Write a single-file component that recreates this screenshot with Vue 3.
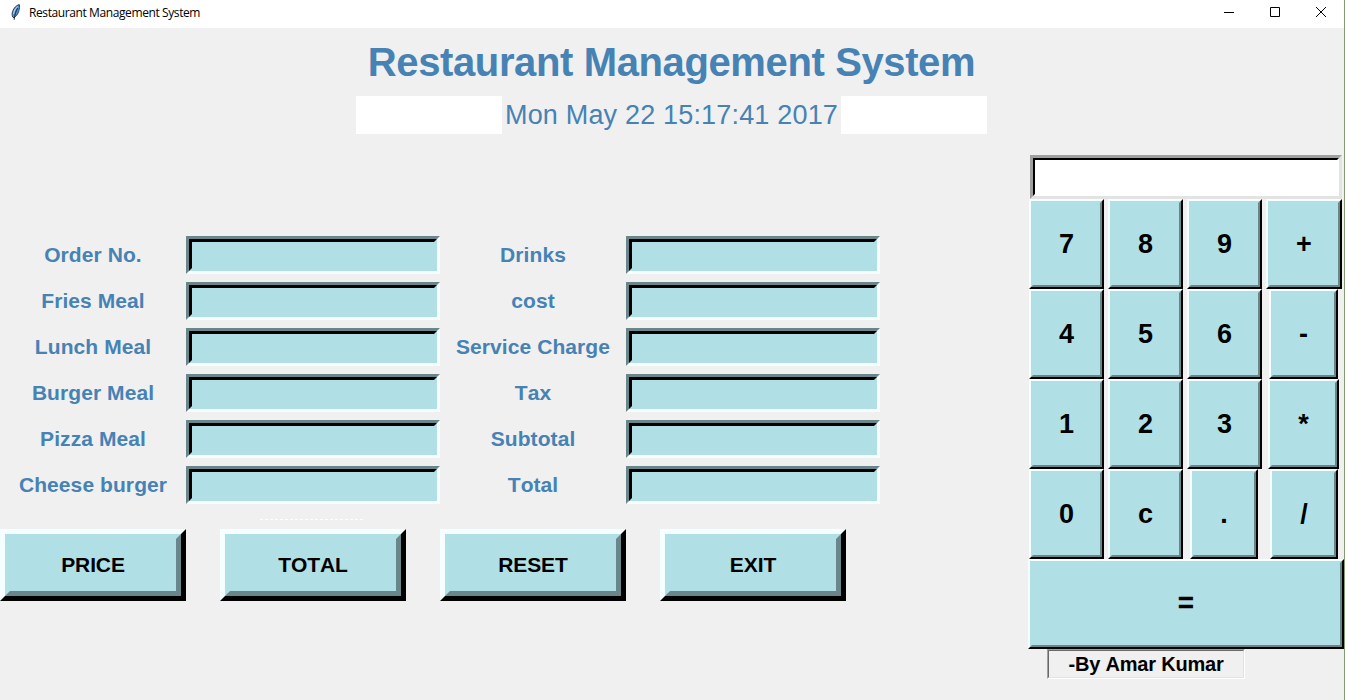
<script setup>
import { ref } from 'vue'

const now = 'Mon May 22 15:17:41 2017'
const leftFields = ['Order No.', 'Fries Meal', 'Lunch Meal', 'Burger Meal', 'Pizza Meal', 'Cheese burger']
const rightFields = ['Drinks', 'cost', 'Service Charge', 'Tax', 'Subtotal', 'Total']
const columns = [leftFields, rightFields]
const actions = ['PRICE', 'TOTAL', 'RESET', 'EXIT']
const keys = [
  { t: '7' }, { t: '8' }, { t: '9' }, { t: '+', c: 'plus' },
  { t: '4' }, { t: '5' }, { t: '6' }, { t: '-', c: 'minus' },
  { t: '1' }, { t: '2' }, { t: '3' }, { t: '*', c: 'times' },
  { t: '0' }, { t: 'c' }, { t: '.', c: 'dot' }, { t: '/', c: 'divide' },
  { t: '=', c: 'equals' },
]
const display = ref('')
</script>

<template>
  <div class="window">
    <header class="titlebar">
      <svg class="feather" width="12" height="18" viewBox="0 0 12 18">
        <path d="M9.3 1.6C6.5 2.2 3.7 5 2.5 8.6C2 10.5 1.9 12.3 2.7 14L4 14.8C5.8 13.6 7.8 11.5 8.7 8.5C9.6 5.5 9.8 3.3 9.3 1.6Z" fill="#4f8fd4" stroke="#26313d" stroke-width="0.9" />
        <path d="M7.6 3.4C5.4 5.4 4 8 3.4 11.2" fill="none" stroke="#a9cdf0" stroke-width="1.1" />
        <path d="M7.6 5C5.8 8.4 4.7 12 4.1 16.8" fill="none" stroke="#111820" stroke-width="0.9" />
      </svg>
      <span class="caption">Restaurant Management System</span>
      <div class="controls">
        <svg width="12" height="12" viewBox="0 0 12 12"><path d="M1 6.5H11" stroke="#000" fill="none" /></svg>
        <svg width="12" height="12" viewBox="0 0 12 12"><path d="M1.5 1.5H10.5V10.5H1.5Z" stroke="#000" fill="none" /></svg>
        <svg width="12" height="12" viewBox="0 0 12 12"><path d="M1 1L11 11M11 1L1 11" stroke="#000" stroke-width="1" fill="none" /></svg>
      </div>
    </header>

    <section class="top">
      <h1>Restaurant Management System</h1>
      <div class="clock">
        <span class="blank"></span>
        <span class="time">{{ now }}</span>
        <span class="blank"></span>
      </div>
    </section>

    <main class="body">
      <section class="order">
        <div class="form">
          <div v-for="(col, i) in columns" :key="i" class="column">
            <label v-for="name in col" :key="name" class="field">
              <span class="name">{{ name }}</span>
              <span class="sunken"><input type="text" /></span>
            </label>
          </div>
        </div>
        <div class="tearoff"></div>
        <div class="actions">
          <button v-for="a in actions" :key="a" class="raised"><span>{{ a }}</span></button>
        </div>
      </section>

      <aside class="calc">
        <div class="screen"><input v-model="display" type="text" /></div>
        <div class="pad">
          <button v-for="k in keys" :key="k.t" class="key" :class="k.c"><span>{{ k.t }}</span></button>
        </div>
        <div class="author"><span>-By Amar Kumar</span></div>
      </aside>
    </main>
  </div>
</template>

<style>
html, body { margin: 0; overflow: hidden; background: #f0f0f0; }
</style>

<style scoped>
* { box-sizing: border-box; }
.window {
  width: 1345px;
  height: 700px;
  background: #f0f0f0;
  border-right: 1px solid #7ba558;
  font-family: "Liberation Sans", Arial, sans-serif;
  font-kerning: none;
  overflow: hidden;
}
.titlebar { display: flex; height: 28px; background: #fff; align-items: flex-start; }
.feather { margin: 3px 0 0 10px; flex: none; }
.caption {
  margin-left: 7px;
  font: 12px/18px "Open Sans", "Noto Sans", sans-serif;
  letter-spacing: -0.4px;
  padding-top: 4px;
  color: #000;
  white-space: nowrap;
}
.controls { margin-left: auto; display: flex; gap: 34px; padding: 6px 17px 0 0; }
.controls svg { display: block; }

.top { width: 1343px; height: 127px; display: flex; flex-direction: column; align-items: center; color: #4682b4; }
h1 {
  margin: 11px 0 0;
  height: 57px;
  font-size: 40px;
  line-height: 46px;
  font-weight: bold;
  letter-spacing: -0.38px;
  white-space: nowrap;
}
.clock { display: flex; width: 631px; height: 38px; justify-content: space-between; }
.blank { width: 146px; background: #fff; }
.time { font-size: 27px; line-height: 39px; letter-spacing: 0.18px; white-space: nowrap; }

.body { display: flex; justify-content: space-between; }
.order { padding-top: 77px; }
.form { display: flex; }
.column { width: 440px; }
.field { display: flex; height: 46px; padding: 4px 0; }
.name {
  width: 186px;
  text-align: center;
  font-size: 21px;
  line-height: 38px;
  font-weight: bold;
  letter-spacing: 0.08px;
  color: #4682b4;
}
.sunken {
  width: 254px;
  height: 38px;
  border: 3px solid;
  border-color: #69868a #f5ffff #f5ffff #69868a;
}
.sunken input {
  display: block;
  width: 100%;
  height: 100%;
  padding: 0;
  border: 3px solid;
  border-color: #000 #b0e0e6 #b0e0e6 #000;
  background: #b0e0e6;
  border-radius: 0;
  outline: none;
}
.tearoff {
  width: 104px;
  height: 1px;
  margin: 11px 0 9px 260px;
  background: repeating-linear-gradient(90deg, #fff 0 3px, transparent 3px 5px);
}
.actions { display: flex; gap: 34px; }
button { font-family: inherit; font-kerning: none; font-weight: bold; color: #000; padding: 0; background: #b0e0e6; border-radius: 0; }
button span { display: flex; width: 100%; height: 100%; align-items: center; justify-content: center; border-style: solid; border-color: #b0e0e6 #69868a #69868a #b0e0e6; }
.raised {
  width: 186px;
  height: 72px;
  border: 5px solid;
  border-color: #f5ffff #000 #000 #f5ffff;
  font-size: 21px;
  letter-spacing: -0.1px;
}
.raised span { border-width: 5px; }

.calc { width: 317px; }
.screen {
  width: 312px;
  height: 44px;
  margin-left: 3px;
  border: 3px solid;
  border-color: #a0a0a0 #e3e3e3 #e3e3e3 #a0a0a0;
}
.screen input {
  display: block;
  width: 100%;
  height: 100%;
  padding: 0;
  background: #fff;
  border: 2px solid;
  border-color: #000 #fff #fff #000;
  border-radius: 0;
  outline: none;
}
.pad { display: grid; grid-template-columns: 79px 79px 79px 80px; grid-auto-rows: 90px; }
.key {
  width: 75px;
  height: 90px;
  margin-left: 2px;
  border: 2px solid;
  border-color: #f5ffff #000 #000 #f5ffff;
  font-size: 27px;
}
.key span { border-width: 2px; }
.plus { width: 76px; }
.minus { width: 69px; margin-left: 5px; }
.times { width: 71px; margin-left: 4px; }
.dot { width: 68px; margin-left: 5px; }
.divide { width: 68px; margin-left: 6px; }
.equals { grid-column: 1 / -1; width: 316px; margin-left: 1px; }
.equals span { padding-bottom: 2px; -webkit-text-stroke: 0.6px #000; }
.author {
  width: 198px;
  height: 30px;
  margin-left: 20px;
  border: 1px solid;
  border-color: #a0a0a0 #fff #fff #a0a0a0;
}
.author span {
  display: block;
  height: 28px;
  border: 1px solid;
  border-color: #696969 #e3e3e3 #e3e3e3 #696969;
  text-align: center;
  font-size: 20px;
  line-height: 26px;
  font-weight: bold;
  letter-spacing: -0.2px;
}
</style>
